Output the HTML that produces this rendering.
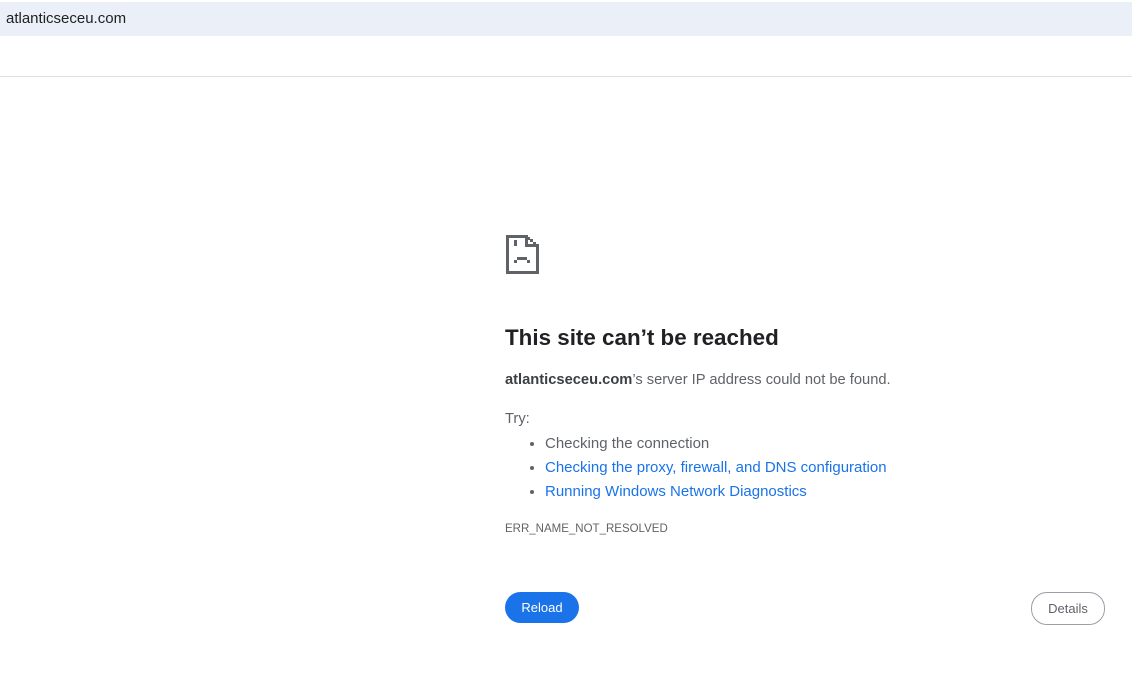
<!DOCTYPE html>
<html><head><meta charset="utf-8"><style>
body{margin:0;width:1132px;height:674px;background:#fff;font-family:"Liberation Sans",sans-serif;position:relative;overflow:hidden}
.bar{position:absolute;left:0;top:2px;width:1132px;height:34px;background:#ebf0f8;font-size:15px;color:#202124;line-height:34px;padding-left:6px;box-sizing:border-box}
.line{position:absolute;left:0;top:76px;width:1132px;height:1px;background:#e0e0e0}
.c{position:absolute;left:505px;color:#5f6368;font-size:14.7px}
h1{position:absolute;left:505px;top:325px;margin:0;font-size:22.4px;font-weight:bold;color:#202124}
ul{position:absolute;left:505px;top:432px;margin:0;padding-left:40px;font-size:15px;line-height:24px;color:#5f6368}
a{color:#1a73e8;text-decoration:none}
.btn{position:absolute;border-radius:16px;font-size:13px;text-align:center;box-sizing:border-box}
</style></head><body>
<div class="bar">atlanticseceu.com</div>
<div class="line"></div>
<svg style="position:absolute;left:505px;top:234px" width="36" height="42" viewBox="0 0 36 42" fill="#5f6368">
<rect x="1" y="1" width="3" height="39"/><rect x="1" y="1" width="21" height="3"/><rect x="1" y="37" width="33" height="3"/><rect x="31" y="12" width="3" height="28"/>
<rect x="20" y="1" width="3" height="12"/><rect x="20" y="10" width="14" height="3"/><rect x="22" y="3" width="3" height="3"/><rect x="25" y="5" width="3" height="3"/><rect x="28" y="8" width="3" height="3"/>
<rect x="9" y="6" width="3" height="6"/>
<rect x="12" y="23" width="10" height="3"/><rect x="9" y="26" width="3" height="3"/><rect x="22" y="26" width="3" height="3"/>
</svg>
<h1>This site can’t be reached</h1>
<div class="c" style="top:372px"><b style="color:#3c4043">atlanticseceu.com</b>’s server IP address could not be found.</div>
<div class="c" style="top:411px">Try:</div>
<ul><li>Checking the connection</li><li><a>Checking the proxy, firewall, and DNS configuration</a></li><li><a>Running Windows Network Diagnostics</a></li></ul>
<div class="c" style="top:523px;font-size:11.5px">ERR_NAME_NOT_RESOLVED</div>
<div class="btn" style="left:505px;top:592px;width:74px;height:31px;line-height:31px;background:#1a73e8;color:#fff">Reload</div>
<div class="btn" style="left:1031px;top:592px;width:74px;height:33px;line-height:31px;border:1px solid #9aa0a6;color:#5f6368">Details</div>
</body></html>
